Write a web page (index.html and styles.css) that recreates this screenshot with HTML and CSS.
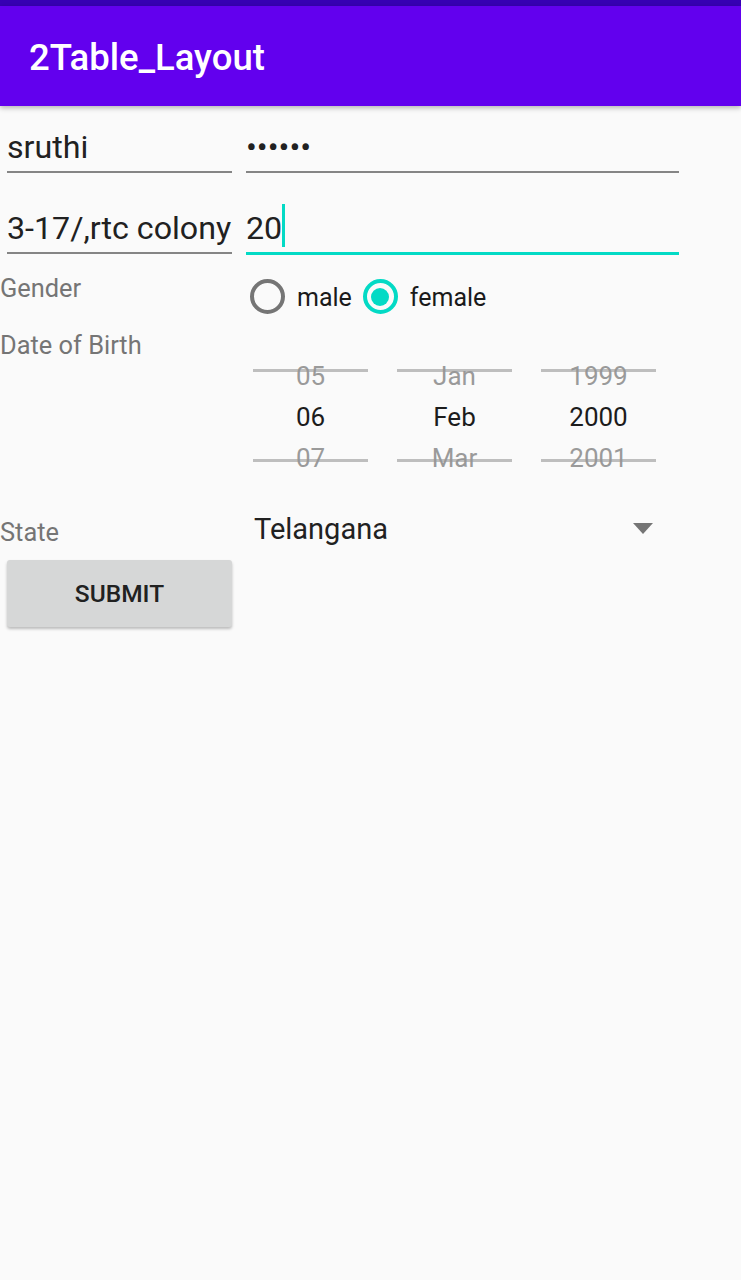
FILE: index.html
```html
<!DOCTYPE html>
<html lang="en">
<head>
<meta charset="utf-8">
<title>2Table_Layout</title>
<link rel="stylesheet" href="styles.css">
</head>
<body>
<div class="status-bar"></div>
<header class="app-bar">
  <h1 class="title">2Table_Layout</h1>
</header>
<main class="table">
  <div class="row row-1">
    <div class="cell-left"><div class="edit edit-left">sruthi</div></div>
    <div class="cell-right"><div class="edit edit-right password">••••••</div></div>
  </div>
  <div class="row row-2">
    <div class="cell-left"><div class="edit edit-left">3-17/,rtc colony</div></div>
    <div class="cell-right"><div class="edit edit-right focused">20<span class="cursor"></span></div></div>
  </div>
  <div class="row row-3">
    <div class="cell-left"><div class="label label-gender">Gender</div></div>
    <div class="cell-right">
      <div class="radio-group">
        <div class="radio"><span class="radio-circle"></span><span class="radio-text">male</span></div>
        <div class="radio checked"><span class="radio-circle"><span class="radio-dot"></span></span><span class="radio-text">female</span></div>
      </div>
    </div>
  </div>
  <div class="row row-4">
    <div class="cell-left"><div class="label label-dob">Date of Birth</div></div>
    <div class="cell-right">
      <div class="date-picker">
        <div class="picker-col">
          <div class="picker-item faded">05</div>
          <div class="picker-item selected">06</div>
          <div class="picker-item faded">07</div>
        </div>
        <div class="picker-col">
          <div class="picker-item faded">Jan</div>
          <div class="picker-item selected">Feb</div>
          <div class="picker-item faded">Mar</div>
        </div>
        <div class="picker-col">
          <div class="picker-item faded">1999</div>
          <div class="picker-item selected">2000</div>
          <div class="picker-item faded">2001</div>
        </div>
      </div>
    </div>
  </div>
  <div class="row row-5">
    <div class="cell-left"><div class="label label-state">State</div></div>
    <div class="cell-right">
      <div class="spinner"><span class="spinner-text">Telangana</span><span class="spinner-arrow"></span></div>
    </div>
  </div>
  <div class="row row-6">
    <div class="cell-left"><button class="submit" type="button">SUBMIT</button></div>
  </div>
</main>
</body>
</html>
```
FILE: styles.css
```css
html, body {
  margin: 0;
  padding: 0;
}
body {
  background: #fafafa;
  font-family: Roboto, "Noto Sans", "Liberation Sans", sans-serif;
  color: #212121;
  width: 741px;
  min-height: 1280px;
}
.status-bar {
  height: 6px;
  background: #3700b3;
}
.app-bar {
  height: 100px;
  background: #6200ee;
  display: flex;
  align-items: center;
  padding: 4px 0 0 29px;
  box-sizing: border-box;
  box-shadow: 0 2px 5px rgba(0, 0, 0, 0.28);
  position: relative;
  z-index: 1;
}
.title {
  margin: 0;
  font-size: 36.5px;
  font-weight: 500;
  line-height: 40px;
  color: #ffffff;
}
.table {
  display: flex;
  flex-direction: column;
}
.row {
  display: flex;
  align-items: flex-start;
}
.cell-left {
  width: 239px;
  flex: none;
}
.cell-right {
  flex: none;
  width: 447px;
}
.edit {
  font-size: 32.2px;
  line-height: 40px;
  height: 40px;
  padding-bottom: 4px;
  border-bottom: 2px solid #858585;
  white-space: nowrap;
  color: #212121;
}
.edit-left {
  margin-left: 7px;
  width: 225px;
}
.edit-right {
  margin-left: 7px;
  width: 433px;
}
.password {
  letter-spacing: 0;
}
.focused {
  border-bottom: 3px solid #03dac5;
  display: flex;
  align-items: center;
}
.cursor {
  display: inline-block;
  width: 3px;
  height: 43px;
  background: #03dac5;
  margin-left: 0;
  margin-top: -6px;
}
.row-1 {
  padding-top: 21px;
}
.row-2 {
  padding-top: 35px;
}
.label {
  font-size: 25.4px;
  line-height: 30px;
  color: #757575;
  white-space: nowrap;
}
.row-3 {
  height: 65px;
}
.label-gender {
  margin-top: 18px;
}
.radio-group {
  display: flex;
  align-items: center;
  margin-left: 11px;
  margin-top: 24px;
}
.radio {
  display: flex;
  align-items: center;
}
.radio-circle {
  width: 35px;
  height: 35px;
  box-sizing: border-box;
  border: 4px solid #757575;
  border-radius: 50%;
  display: flex;
  align-items: center;
  justify-content: center;
}
.checked .radio-circle {
  border-color: #03dac5;
}
.radio-dot {
  width: 18px;
  height: 18px;
  border-radius: 50%;
  background: #03dac5;
}
.radio-text {
  font-size: 25px;
  line-height: 30px;
  color: #1a1a1a;
  margin-left: 12px;
  margin-right: 11px;
  padding-top: 3px;
}
.row-4 {
  height: 159px;
}
.label-dob {
  margin-top: 10px;
}
.date-picker {
  display: flex;
  gap: 29px;
  margin-left: 14px;
  margin-top: 36px;
}
.picker-col {
  width: 115px;
  position: relative;
  display: flex;
  flex-direction: column;
}
.picker-col::before,
.picker-col::after {
  content: "";
  position: absolute;
  left: 0;
  right: 0;
  height: 3px;
  background: rgba(150, 150, 150, 0.6);
}
.picker-col::before {
  top: 13px;
}
.picker-col::after {
  top: 103px;
}
.picker-item {
  height: 41px;
  line-height: 41px;
  font-size: 26px;
  text-align: center;
}
.faded {
  color: #9a9a9a;
}
.selected {
  color: #1c1c1c;
}
.row-5 {
  padding-top: 32px;
}
.label-state {
  margin-top: 5.6px;
}
.spinner {
  display: flex;
  align-items: center;
  height: 36px;
  padding-left: 15px;
  padding-right: 33px;
}
.spinner-text {
  font-size: 29px;
  line-height: 36px;
  color: #212121;
}
.spinner-arrow {
  margin-left: auto;
  width: 0;
  height: 0;
  border-left: 10px solid transparent;
  border-right: 10px solid transparent;
  border-top: 11px solid #757575;
  margin-top: -2px;
}
.row-6 {
  padding-top: 13px;
}
.submit {
  margin-left: 7px;
  width: 225px;
  height: 67px;
  border: none;
  border-radius: 3px;
  background: #d6d7d7;
  box-shadow: 0 2px 3px rgba(0, 0, 0, 0.25);
  font-family: Roboto, "Noto Sans", "Liberation Sans", sans-serif;
  font-size: 24.5px;
  font-weight: 500;
  color: #212121;
  padding: 0;
  display: flex;
  align-items: center;
  justify-content: center;
}
```
